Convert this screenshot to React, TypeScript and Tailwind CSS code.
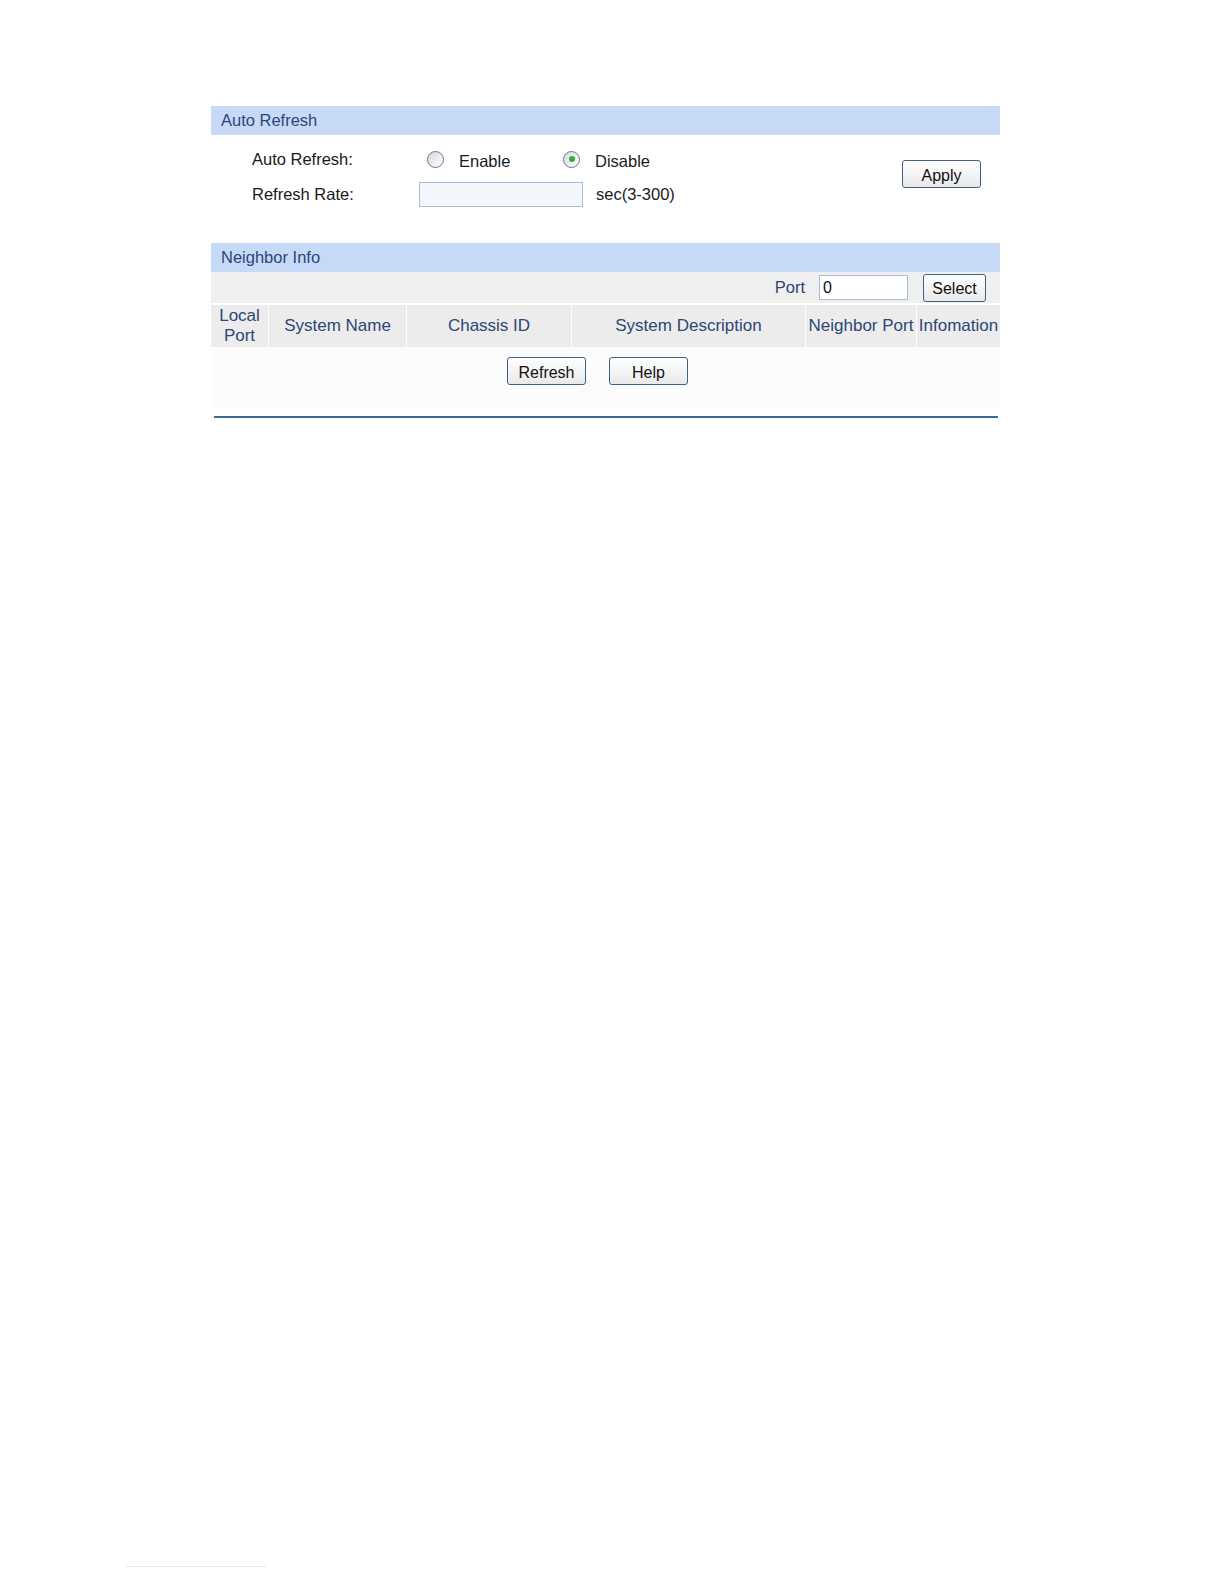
import React from "react"

const font = { fontFamily: '"Liberation Sans", Arial, sans-serif' }

function Btn({ label, w }: { label: string; w: string }) {
  return (
    <button
      className={`${w} h-[28px] rounded-[3px] border border-[#3f5f85] bg-gradient-to-b from-white to-[#e9e9e9] text-[16px] text-[#111] leading-none pt-[3px]`}
    >
      {label}
    </button>
  )
}

function Radio({ checked }: { checked?: boolean }) {
  return (
    <span className="inline-flex h-[17px] w-[17px] items-center justify-center rounded-full border border-[#5f7a99] bg-gradient-to-br from-[#d9d9d9] to-white">
      {checked && <span className="h-[6px] w-[6px] rounded-full bg-[#2fae3c]" />}
    </span>
  )
}

const cols = [
  { label: ["Local", "Port"], w: "w-[57px]" },
  { label: ["System Name"], w: "w-[137px]" },
  { label: ["Chassis ID"], w: "w-[164px]" },
  { label: ["System Description"], w: "w-[233px]" },
  { label: ["Neighbor Port"], w: "w-[110px]" },
  { label: ["Infomation"], w: "flex-1" },
]

export default function App() {
  return (
    <div className="relative h-[1584px] w-[1224px] bg-white" style={font}>
      <div className="flex flex-col pl-[211px] pt-[106px]">
        <div className="w-[789px]">
          {/* Auto Refresh panel */}
          <div className="flex h-[29px] items-center bg-[#c6daf8] pl-[10px] text-[16.5px] text-[#2d4677]">
            Auto Refresh
          </div>
          <div className="flex h-[108px] items-start">
            <div className="flex flex-col pl-[41px] pt-[12px] text-[16.5px] text-[#1a1a1a]">
              <div className="flex h-[24px] items-center">
                <span className="w-[175px]">Auto Refresh:</span>
                <Radio />
                <span className="ml-[15px] mt-[4px] w-[104px]">Enable</span>
                <Radio checked />
                <span className="ml-[15px] mt-[4px]">Disable</span>
              </div>
              <div className="mt-[10px] flex h-[26px] items-center">
                <span className="w-[167px]">Refresh Rate:</span>
                <input
                  className="h-[25px] w-[164px] border border-[#a9bdd8] bg-[#f3f6fb] outline-none"
                  readOnly
                />
                <span className="ml-[13px]">sec(3-300)</span>
              </div>
            </div>
            <div className="ml-auto mr-[19px] mt-[25px]">
              <Btn label="Apply" w="w-[79px]" />
            </div>
          </div>

          {/* Neighbor Info panel */}
          <div className="flex h-[29px] items-center bg-[#c6daf8] pl-[10px] text-[16.5px] text-[#2d4677]">
            Neighbor Info
          </div>
          <div className="flex h-[31px] items-center justify-end bg-[#efefef] pr-[14px] text-[16.5px]">
            <span className="mr-[14px] text-[#2d4677]">Port</span>
            <input
              className="h-[25px] w-[89px] border border-[#a9bdd8] bg-white pl-[3px] text-[16px] text-[#111] outline-none"
              defaultValue="0"
              readOnly
            />
            <div className="ml-[15px]">
              <Btn label="Select" w="w-[63px]" />
            </div>
          </div>
          <div className="mt-[2px] flex h-[42px] gap-[1px] bg-white">
            {cols.map((c) => (
              <div
                key={c.label.join(" ")}
                className={`${c.w} flex flex-col items-center justify-center bg-[#ececec] text-[17px] leading-[20px] text-[#2d4677]`}
              >
                {c.label.map((l) => (
                  <span key={l}>{l}</span>
                ))}
              </div>
            ))}
          </div>
          <div className="flex h-[60px] justify-center gap-[23px] bg-[#fcfcfc] pt-[10px] pr-[16px]">
            <Btn label="Refresh" w="w-[79px]" />
            <Btn label="Help" w="w-[79px]" />
          </div>
        </div>
        <div className="ml-[3px] mt-[9px] h-[2px] w-[784px] bg-[#3d6a96]" />
      </div>
      <div className="absolute left-[126px] top-[1566px] h-[1px] w-[140px] bg-[#e4e8ee]" />
    </div>
  )
}
